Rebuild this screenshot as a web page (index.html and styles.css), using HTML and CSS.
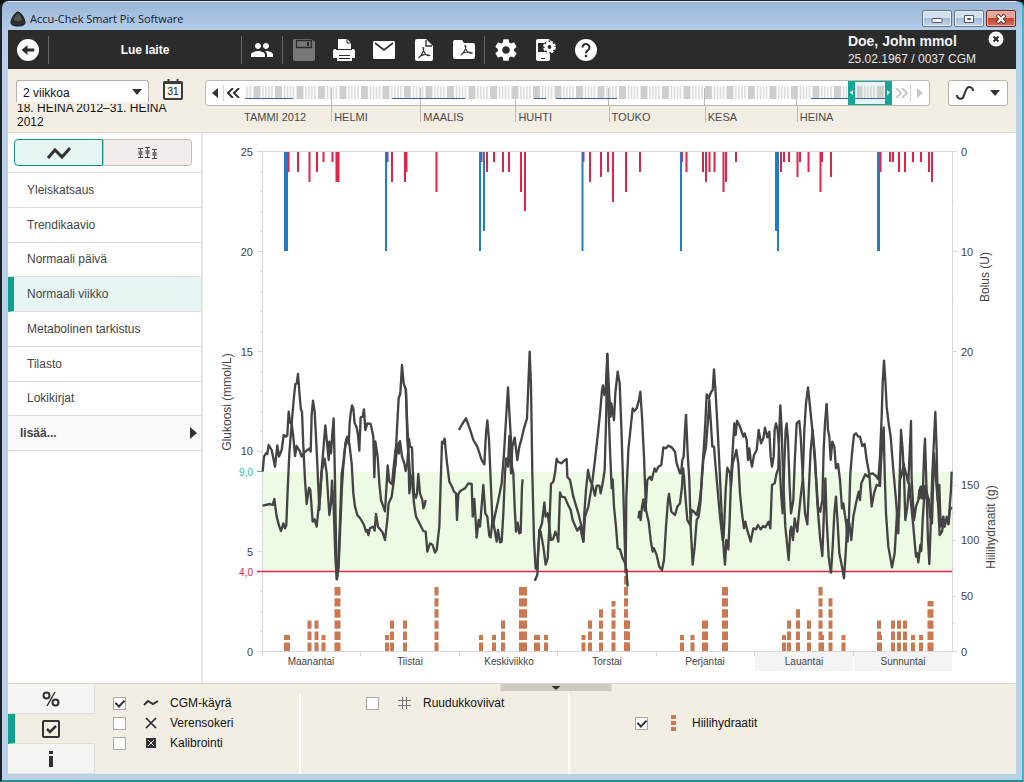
FILE: index.html
```html
<!DOCTYPE html>
<html lang="fi">
<head>
<meta charset="utf-8">
<title>Accu-Chek Smart Pix Software</title>
<link rel="stylesheet" href="styles.css">
</head>
<body>
<div class="window">
  <div class="titlebar">
    <svg class="app-icon" viewBox="0 0 16 16" aria-hidden="true"><path d="M8 1C5 1 1 8 1 11.500c0 2.500 2.500 3.500 7 3.500s7-1 7-3.500C15 8 11 1 8 1z" fill="#2e2e2e" stroke="#111"/><path d="M8 3C6 3 4 7 4 9c2 1.500 6 1.500 8 0 0-2-2-6-4-6z" fill="#555"/></svg>
    <span class="app-name">Accu-Chek Smart Pix Software</span>
    <div class="window-buttons">
      <button type="button" aria-label="Pienennä"><svg width="12" height="10"><rect x="1" y="4.500" width="10" height="4" rx="1" fill="#fff" stroke="#4c5566"/></svg></button>
      <button type="button" aria-label="Suurenna"><svg width="12" height="10"><path d="M1.500 1.500h9v7h-9zM4.500 4.500h3v1h-3z" fill="#fff" stroke="#4c5566"/></svg></button>
      <button type="button" class="close" aria-label="Sulje"><svg width="14" height="10"><path d="M3 1l8 8M11 1L3 9" stroke="#5b2a2a" stroke-width="4"/><path d="M3.500 1.500l7 7M10.500 1.500l-7 7" stroke="#fff" stroke-width="2.400"/></svg></button>
    </div>
  </div>

  <div class="app">
    <header class="toolbar">
      <button type="button" class="tool" aria-label="Takaisin"><svg width="24" height="24" viewBox="0 0 24 24"><circle cx="12" cy="12" r="11" fill="#fff"/><path d="M5.500 12l6-5v3.400h6.700v3.200h-6.700V17z" fill="#2b2b2b"/></svg></button>
      <button type="button" class="read-device">Lue laite</button>
      <div class="tool-group"><button type="button" class="tool" aria-label="Potilaat"><svg width="24" height="24" viewBox="0 0 24 24"><path fill="#fff" d="M16 11c1.660 0 2.990-1.340 2.990-3S17.660 5 16 5s-3 1.340-3 3 1.340 3 3 3zm-8 0c1.660 0 2.990-1.340 2.990-3S9.660 5 8 5 5 6.340 5 8s1.340 3 3 3zm0 2c-2.330 0-7 1.170-7 3.500V19h14v-2.500C15 14.170 10.330 13 8 13zm8 0c-.29 0-.62.020-.97.050 1.160.84 1.970 1.970 1.970 3.450V19h6v-2.500c0-2.330-4.670-3.500-7-3.500z"/></svg></button></div>
      <div class="tool-group spaced">
        <button type="button" class="tool" aria-label="Tallenna" disabled><svg width="24" height="24" viewBox="0 0 24 24"><path d="M3 1h16l4 3v17a2 2 0 0 1-2 2H3a2 2 0 0 1-2-2V3a2 2 0 0 1 2-2z" fill="#777"/><path d="M4.500 2.500h15v7h-15z" fill="#777" stroke="#2b2b2b" stroke-width="1.300"/><path d="M15 4h2v4h-2z" fill="#2b2b2b"/></svg></button>
        <button type="button" class="tool" aria-label="Tulosta"><svg width="24" height="24" viewBox="0 0 24 24"><path d="M6 1h9l4 4v6H6z" fill="#fff"/><path d="M15 1v4h4" fill="none" stroke="#2b2b2b"/><path d="M3 11h18a2 2 0 0 1 2 2v7h-3v3H5v-3H1v-7a2 2 0 0 1 2-2z" fill="#fff"/><path d="M4 11.500h16M7 17.500h11M7 20.500h11" stroke="#2b2b2b" stroke-width="1.200"/></svg></button>
        <button type="button" class="tool" aria-label="Sähköposti"><svg width="24" height="24" viewBox="0 0 24 24"><rect x="1" y="3" width="22" height="18" rx="1.500" fill="#fff"/><path d="M3 5l9 7 9-7" fill="none" stroke="#2b2b2b" stroke-width="1.600"/></svg></button>
        <button type="button" class="tool" aria-label="PDF"><svg width="24" height="24" viewBox="0 0 24 24"><path d="M3 3a2 2 0 0 1 2-2h9l7 7v13a2 2 0 0 1-2 2H5a2 2 0 0 1-2-2z" fill="#fff"/><path d="M14 2v6h6" fill="none" stroke="#2b2b2b" stroke-width="1.300"/><path d="M11 9.500c2 0 0 7-4.500 10.500 2-3 7-4.500 11-2.500-3 1-6-2.500-6.500-8z" fill="none" stroke="#2b2b2b" stroke-width="1.100"/></svg></button>
        <button type="button" class="tool" aria-label="PDF-kansio"><svg width="24" height="24" viewBox="0 0 24 24"><path d="M1 4a2 2 0 0 1 2-2h7l2 3h9a2 2 0 0 1 2 2v12a2 2 0 0 1-2 2H3a2 2 0 0 1-2-2z" fill="#fff"/><path d="M13 7.500c2 0 0 7-4 9.500 2-3 7-3.500 11-2-3 1-6.500-2-7-7.500z" fill="none" stroke="#2b2b2b" stroke-width="1.100"/></svg></button>
      </div>
      <div class="tool-group spaced">
        <button type="button" class="tool" aria-label="Asetukset"><svg width="26" height="26" viewBox="0 0 24 24"><path fill="#fff" d="M19.430 12.980c.04-.32.07-.64.07-.98s-.03-.66-.07-.98l2.110-1.650c.19-.15.24-.42.12-.64l-2-3.460c-.12-.22-.39-.3-.61-.22l-2.490 1c-.52-.4-1.080-.73-1.690-.98l-.38-2.650C14.460 2.180 14.250 2 14 2h-4c-.25 0-.46.180-.49.420l-.38 2.650c-.61.250-1.170.59-1.690.98l-2.490-1c-.23-.09-.49 0-.61.220l-2 3.460c-.13.220-.07.490.12.640l2.110 1.650c-.04.320-.07.650-.07.980s.03.660.07.980l-2.110 1.650c-.19.150-.24.420-.12.640l2 3.460c.12.220.39.300.61.220l2.490-1c.52.400 1.080.730 1.690.980l.38 2.650c.03.240.24.420.49.420h4c.25 0 .46-.18.490-.42l.38-2.650c.61-.25 1.170-.59 1.690-.98l2.490 1c.23.090.49 0 .61-.22l2-3.460c.12-.22.07-.49-.12-.64l-2.110-1.650zM12 15.500c-1.930 0-3.500-1.570-3.500-3.500s1.570-3.500 3.500-3.500 3.500 1.570 3.500 3.500-1.570 3.500-3.500 3.500z"/></svg></button>
        <button type="button" class="tool" aria-label="Laiteasetukset"><svg width="24" height="24" viewBox="0 0 24 24"><rect x="2" y="1" width="14" height="22" rx="2" fill="#fff"/><path d="M4 5h10v9H4z" fill="#2b2b2b"/><path d="M7 20.500h4" stroke="#2b2b2b"/><circle cx="15.500" cy="9" r="6.500" fill="#2b2b2b"/><circle cx="15.500" cy="9" r="5.200" fill="none" stroke="#fff" stroke-width="2.500" stroke-dasharray="2.600 1.480"/><circle cx="15.500" cy="9" r="3.400" fill="none" stroke="#fff" stroke-width="3"/></svg></button>
        <button type="button" class="tool" aria-label="Ohje"><svg width="24" height="24" viewBox="0 0 24 24"><circle cx="12" cy="12" r="11" fill="#fff"/><path d="M8.500 9.500a3.500 3.500 0 1 1 5.500 2.800c-1.300 1-2 1.500-2 3" fill="none" stroke="#2b2b2b" stroke-width="2"/><circle cx="12" cy="18" r="1.300" fill="#2b2b2b"/></svg></button>
      </div>
      <div class="patient"><strong>Doe, John mmol</strong><span>25.02.1967 / 0037 CGM</span></div>
      <button type="button" class="patient-close" aria-label="Sulje potilas"><svg width="16" height="16"><circle cx="8" cy="8" r="7.500" fill="#fff"/><path d="M5.500 5.500l5 5M10.500 5.500l-5 5" stroke="#2b2b2b" stroke-width="2"/></svg></button>
    </header>

    <section class="period">
      <div class="range">
        <div class="range-row">
          <div class="range-select"><select aria-label="Ajanjakso"><option>2 viikkoa</option></select><svg width="10" height="6"><path d="M0 0h10L5 6z" fill="#333"/></svg></div>
          <button type="button" class="calendar" aria-label="Kalenteri"><svg width="20" height="22" viewBox="0 0 20 22"><rect x="1" y="4" width="18" height="17" rx="1" fill="#f8f5ee" stroke="#3c3c3c" stroke-width="2"/><path d="M1 5h18M5.500 1v5M14.500 1v5" stroke="#3c3c3c" stroke-width="2"/><text class="cal-day" x="10" y="17">31</text></svg></button>
        </div>
        <p class="range-text">18. HEINA 2012–31. HEINA 2012</p>
      </div>
      <div class="timeline">
        <div class="track">
          <button type="button" class="step divided" aria-label="Edellinen"><svg width="6" height="10"><path d="M6 0v10L0 5z" fill="#333"/></svg></button>
          <button type="button" class="step" aria-label="Edellinen jakso"><svg width="13" height="10"><path d="M6 0L1 5l5 5M12 0L7 5l5 5" fill="none" stroke="#333" stroke-width="2"/></svg></button>
          <svg class="days" viewBox="242 81 651 24" preserveAspectRatio="none" aria-hidden="true">
            <defs><pattern id="week" x="361" y="0" width="21.500" height="120" patternUnits="userSpaceOnUse"><path d="M0 0h7v120H0z" fill="#cecece"/><path d="M9 0h1v120H9zM12 0h1v120h-1zM15 0h1v120h-1zM18 0h1v120h-1z" fill="#c6c6c6"/></pattern></defs>
            <path d="M331.500 88v20M420.500 88v20M515.500 88v20M608.500 88v20M704.500 88v20M796.500 88v20" stroke="#bbb"/>
            <path d="M245 86h602v13H245z" fill="url(#week)"/>
            <path d="M245 98h48v1h-48zM392 98h73v1h-73zM534 98h12v1h-12zM556 98h61v1h-61zM811 98h37v1h-37z" fill="#3f62a5"/>
            <path d="M850 82h40v22h-40z" fill="#e6f5f3"/><path d="M857 86h27v13h-27z" fill="url(#week)"/><path d="M855 98h30v1h-30z" fill="#3f62a5"/>
            <path d="M848 81h44v24h-44zM855 82v22h30V82z" fill="#16a697" fill-rule="evenodd"/>
            <path d="M853 90v5l-3-2.500zM887 90v5l3-2.500z" fill="#fff"/>
          </svg>
          <button type="button" class="step divided" aria-label="Seuraava jakso" disabled><svg width="13" height="10"><path d="M1 0l5 5-5 5M7 0l5 5-5 5" fill="none" stroke="#c8c8c8" stroke-width="2"/></svg></button>
          <button type="button" class="step" aria-label="Seuraava" disabled><svg width="6" height="10"><path d="M0 0v10l6-5z" fill="#c8c8c8"/></svg></button>
        </div>
        <div class="months"><span>TAMMI 2012</span><span>HELMI</span><span>MAALIS</span><span>HUHTI</span><span>TOUKO</span><span>KESA</span><span>HEINA</span></div>
      </div>
      <button type="button" class="curve-menu" aria-label="Käyrätyyppi"><svg width="20" height="16"><path d="M1 10c0 4 6 6 7 0l2-5c2-5 7-3 7 1" fill="none" stroke="#333" stroke-width="2"/></svg><svg width="10" height="6"><path d="M0 0h10L5 6z" fill="#333"/></svg></button>
    </section>

    <div class="workspace">
      <aside class="sidebar">
        <div class="view-switch">
          <button type="button" class="on" aria-label="Käyrä"><svg width="24" height="14"><path d="M1 12l7-8 7 7 8-9" fill="none" stroke="#333" stroke-width="3"/></svg></button>
          <button type="button" aria-label="Laatikkokaavio"><svg width="20" height="12"><path d="M0 1.500h5M0 10.500h5M2.500 1v10M7 .5h5M7 10.500h5M9.500 0v10M14 2.500h5M14 11.500h5M16.500 2v10" stroke="#444"/><path d="M.5 4h4v4h-4zM7.500 3h4v4h-4zM14.500 5h4v4h-4z" fill="#777"/></svg></button>
        </div>
        <nav class="views">
          <a href="#">Yleiskatsaus</a>
          <a href="#">Trendikaavio</a>
          <a href="#">Normaali päivä</a>
          <a href="#" class="current" aria-current="page">Normaali viikko</a>
          <a href="#">Metabolinen tarkistus</a>
          <a href="#">Tilasto</a>
          <a href="#">Lokikirjat</a>
          <a href="#" class="more">lisää...<svg width="7" height="12"><path d="M0 0v12l7-6z" fill="#333"/></svg></a>
        </nav>
      </aside>

      <main class="chart-area">
        <svg class="chart" viewBox="203 133 813 550" role="img" aria-label="Normaali viikko">
          <path d="M263 472h689v99H263z" fill="#edfbe4"/>
          <path d="M755 652h98v19h-98zM854 652h98v19h-98z" fill="#f4f4f4"/>
          <path class="grid" d="M257 151.500H957M262.500 151v505M952.500 151v501M257 651.500H957M257 251.500h6M257 351.500h6M257 451.500h6M257 551.500h6M952 251.500h5M952 351.500h5M952 485.500h4M952 540.500h4M952 596.500h4M360.500 652v4M459.500 652v4M557.500 652v4M656.500 652v4M754.500 652v4M853.500 652v4"/>
          <path class="grid" d="M260 171.500h3M260 191.500h3M260 211.500h3M260 231.500h3M260 271.500h3M260 291.500h3M260 311.500h3M260 331.500h3M260 371.500h3M260 391.500h3M260 411.500h3M260 431.500h3M260 491.500h3M260 511.500h3M260 531.500h3M260 591.500h3M260 611.500h3M260 631.500h3M952 201.500h2M952 301.500h2M952 512.500h2M952 568.500h2M952 623.500h2"/>
          <path d="M257 471.500h5" stroke="#2bbfa8"/>

          <g class="bolus" fill="none" stroke-width="2">
            <path stroke="#de2549" d="M288.500 152v20M298 152v20M309.500 152v30M317 152v20M323.500 152v10M332.500 152v10M336.500 152v30M338.500 152v30M387.500 152v10M392 152v30M405 152v30M406.500 152v20M436.500 152v40M481.500 152v10M487 152v20M494 152v10M503 152v20M509 152v20M521 152v40M525 152v59M583.500 152v10M590 152v30M601 152v25M608 152v20M613 152v50M626 152v40M640 152v20M682 152v10M686.500 152v20M703 152v20M706 152v30M709.500 152v20M714.500 152v20M723.500 152v40M726 152v30M736 152v10M781 152v20M784 152v10M789 152v10M797.500 152v25M800 152v10M808.500 152v20M820.500 152v40M822 152v10M831 152v25M880.500 152v20M890 152v10M893 152v10M899 152v20M905 152v20M913 152v10M921 152v10M929 152v20M932 152v30"/>
            <path stroke="#207cc8" d="M285 152v99M287 152v99M386 152v99M480 152v99M484 152v79M582.500 152v99M681 152v99M776 152v79M778 152v99M878 152v99M879 152v99"/>
          </g>

          <g class="carbs">
            <path stroke-width="4" d="M309.500 651v-31M316.500 651v-31M323.500 651v-16M387 651v-16M392 651v-31M405 651v-31M436.500 651v-65M481 651v-16M494 651v-16M503 651v-31M546 651v-16M583.500 651v-16M590 651v-31M601 651v-42M613.500 651v-50M626 651v-82M682 651v-16M692.500 651v-16M784 651v-16M789 651v-31M798 651v-42M809 651v-31M820.500 651v-65M822 651v-16M830.500 651v-54M843.500 651v-16M879 651v-31M880 651v-16M893 651v-31M899 651v-31M905 651v-31M913 651v-16M921 651v-16"/>
            <path stroke-width="6" d="M287 651v-16M337.500 651v-65M537 651v-16M627 651v-31M705 651v-31M725 651v-65M930.500 651v-50"/>
            <path stroke-width="8" d="M523 651v-65"/>
          </g>

          <path d="M257 571.500H952" stroke="#e0254f" stroke-width="1.500"/>

          <g class="glucose">
            <g transform="translate(250 340) scale(.33333)">
              <path d="M38 395L42 350 48 340 52 342 56 315 65 330 70 355 75 380 82 316 87 350 95 330 101 285 108 290 112 285 116 215 120 248 125 250 130 290 135 348 140 318 150 335 155 350 165 335 180 325 182 335 185 225 189 182 194 215 200 330 205 440 208 510 214 400 220 330 226 256 232 318 236 360 238 305 243 340 247 280 251 235 255 420 258 600 261 717 266 680 270 580 276 440 282 345 290 295 298 310 305 370 310 460 315 500 322 525 332 537 342 555 348 575 352 570 355 585 360 565 370 560 374 572 378 522 384 560 392 570 398 578 405 600 412 540 416 490 425 470 432 420 436 370 440 285 446 175 451 160 456 75 461 130 468 150 472 300 480 400 486 420 492 490 498 530 506 545 520 573 527 575 532 635 540 610 548 615 555 638 560 630 568 560 573 400 576 305 580 310 584 296 590 360 598 425 605 438 612 455 618 460 621 540 625 462 632 452 645 445 655 430 665 432 668 530 673 477 680 593 686 540 690 560 700 435 706 520 712 530 718 590"/>
              <path d="M38 497L60 492 68 495 73 477 80 530 88 560 93 573 100 550 105 565 109 555 113 450 118 340 125 250 131 180 136 132 140 130 144 102 150 180 153 210 156 215 160 320 165 420 170 492 177 443 181 450 188 545 194 538 200 560 206 500 210 470 216 390 224 356 230 400 238 525 243 490 246 422 251 500 256 650 260 718 265 680 270 540 275 400 282 360 286 310 292 290 296 312 299 250 302 220 306 196 310 205 314 250 320 262 324 285 328 332 332 232 338 230 342 208 346 270 352 250 362 252 370 290 373 412 376 304 383 350 388 430 393 480 405 514 410 430 413 376 418 425 426 432 430 390 436 335 440 310 445 320 450 303 456 350 463 370 467 393 472 370 477 297 480 320 486 322 488 380 492 460 498 473 501 460 505 402 510 460 517 480 520 505 524 495 527 480"/>
              <path d="M432 400L437 370 441 320 447 340 449 305M467 145L474 300 478 460 484 410"/>
            </g>
            <g transform="translate(450 340) scale(.33333)">
              <path d="M27 270L35 255 48 235 58 262 70 300 82 320 95 360 103 373 108 280 112 241 117 300 122 420 128 560 134 530 145 480 155 430 162 340 168 240 174 142 180 250 183 300 186 380 190 400 194 500 198 575 203 548 208 580 212 578 216 440 218 418"/>
              <path d="M118 590L122 592 128 535 134 570 140 605 144 570 150 607 155 605 160 520 165 400 168 355 174 380 178 288 183 400 187 320 194 293 202 360 208 320 215 295 222 265 231 235 239 35 243 140 247 400 252 600 257 686 262 685 268 570 272 575 280 620 287 674 293 655 298 560 303 432 310 425 315 400 320 356 325 366 335 370 342 362 350 357 352 410 360 420 370 470 385 520 395 560 400 605 405 530 415 500 425 440 435 360 445 270 451 210 456 150 459 136 463 165 467 150 472 42 477 150 482 230 484 190 489 220 492 240 496 160 503 95 509 130 514 260 519 420 524 600 527 690 529 470 535 330 548 205 553 213 560 205 567 180 571 155 576 230 582 350 588 510 596 545 602 600 608 635 612 625 620 645 628 680 636 690 642 660 648 560 654 480 657 462 664 515 675 525 682 500 690 490 696 440 699 383"/>
              <path d="M254 722L262 705 264 640 269 570 276 550 283 487 287 530 293 520 298 560 303 600 309 598 316 575 322 590 325 605 330 457 335 470 345 472 352 490 362 510 368 540 382 572 390 560 400 605 403 520 408 450 414 390 420 420 427 435 435 467 440 437 448 437 452 460 458 430 464 390 468 250 472 42 475 180 480 330 485 445 488 418 492 500 498 560 503 625 510 628 518 655 526 670 530 700 533 740"/>
              <path d="M565 535L568 515 572 540 576 500 580 478 584 512 588 490 592 420 600 410 605 420 610 400 614 385 618 395 625 380 634 375 640 322 648 325 655 317 665 322 675 335 680 370 690 400 693 400 697 360 701 350 705 270 708 222"/>
            </g>
            <g transform="translate(640 340) scale(.33333)">
              <path d="M138 222L143 340 148 420 152 560 158 674 164 620 170 540 176 530 182 480 186 400 191 330 196 250 200 163 206 175 210 165 214 155 218 150 222 88 227 160 233 270 238 370 243 480 248 580 252 640 255 674 259 600 265 628 269 540 273 420 278 330 283 250 287 285 291 243 298 255 306 278 310 290 314 280 320 300 324 360 328 325 332 360 336 380 342 345 350 330 356 270 363 310 370 295 375 263 382 292 388 275 392 350 396 380 401 350 404 270 408 250 413 270 417 320 420 400 424 470 428 520 433 370 437 270 440 250 444 300 449 440 453 520 460 480 464 370 470 250 478 243 482 290 488 400 495 520 502 553 506 460 512 330 518 270 525 350 532 490 540 590 547 648 551 540 553 470 556 415 560 540 566 650 573 700"/>
              <path d="M129 383L132 410 137 480 142 540 150 555 155 510 162 515 170 525 178 490 184 440 190 360 198 320 204 240 208 180 212 240 217 320 222 320 226 370 232 440 240 530 248 600 251 590 257 450 262 383 270 400 273 440 278 370 284 350 289 330 295 370 300 460 306 520 312 565 316 545 323 575 332 605 340 565 348 568 354 555 362 568 370 558 376 562 386 545 391 565 396 435 404 430 410 400 415 385 418 270 421 196 425 270 430 430 436 560 446 660 451 570 454 560 459 600 464 535 472 575 476 530 482 470 488 420 493 270 498 190 504 142 510 200 516 260 522 330 530 440 534 500 541 515 547 480 551 330 555 250 557 225 560 190"/>
            </g>
            <g transform="translate(800 340) scale(.33333)">
              <path d="M80 190L84 270 88 290 92 360 97 305 103 320 108 385 114 372 120 420 126 505 130 490 134 520 140 560 143 605 147 530 151 400 156 340 162 285 168 280 175 290 180 290 187 318 194 312 200 360 208 403 218 400 228 408 235 418 240 350 245 230 248 130 252 62 256 120 260 200 266 250 272 290 280 390 288 480 295 580 298 450 303 270 308 330 310 370 318 400 325 430 333 243 335 420 342 540 348 500 355 480 358 450 364 440 368 475 372 350 375 296 379 430 384 600 388 672 392 560 397 400 402 300 406 216 410 330 413 480 418 435 422 560 430 530 434 560 440 530 446 550 449 500 453 450 455 395"/>
              <path d="M93 700L98 620 103 520 108 470 113 550 118 640 126 680 132 715 137 640 142 540 148 550 154 600 160 530 168 490 176 455 180 480 184 430 196 403 203 410 208 403 215 500 222 460 230 435 240 438 243 370 246 320 251 262 254 400 258 520 265 620 276 682 284 640 291 520 297 530 300 420 306 400 311 370 316 540 322 500 328 430 333 490 340 560 348 650 352 640 355 667 361 615 364 633 368 540 372 480 375 440 386 478 390 530 396 550 402 340 408 420 414 490 419 585 426 575 432 540 440 540 445 553 450 510 455 500"/>
              <path d="M238 438L242 330 247 330 250 270M358 478L362 440 366 475 370 437 374 470 378 437 379 475 388 480"/>
            </g>
          </g>

          <g class="labels end"><text x="253" y="156">25</text><text x="253" y="256">20</text><text x="253" y="356">15</text><text x="253" y="455">10</text><text x="253" y="556">5</text><text x="253" y="656">0</text><text class="high" x="253" y="476">9,0</text><text class="low" x="253" y="576">4,0</text></g>
          <g class="labels"><text x="961" y="156">0</text><text x="961" y="256">10</text><text x="961" y="356">20</text><text x="961" y="489">150</text><text x="961" y="544">100</text><text x="961" y="600">50</text><text x="961" y="656">0</text></g>
          <g class="labels mid"><text x="311" y="665">Maanantai</text><text x="410" y="665">Tiistai</text><text x="509" y="665">Keskiviikko</text><text x="607" y="665">Torstai</text><text x="705" y="665">Perjantai</text><text x="804" y="665">Lauantai</text><text x="903" y="665">Sunnuntai</text></g>
          <g class="axis-names"><text transform="translate(231 402) rotate(-90)">Glukoosi (mmol/L)</text><text transform="translate(989 277) rotate(-90)">Bolus (U)</text><text transform="translate(995 527) rotate(-90)">Hiilihydraatit (g)</text></g>
        </svg>
      </main>
    </div>

    <section class="bottom">
      <div class="tabs">
        <button type="button" aria-label="Tilastot"><svg width="18" height="16"><circle cx="4.500" cy="4.500" r="3" fill="none" stroke="#333" stroke-width="2"/><circle cx="13.500" cy="11.500" r="3" fill="none" stroke="#333" stroke-width="2"/><path d="M13 1L5 15" stroke="#333" stroke-width="1.500"/></svg></button>
        <button type="button" class="on" aria-label="Selite"><svg width="18" height="18"><rect x="1" y="1" width="16" height="16" rx="1" fill="none" stroke="#333" stroke-width="2"/><path d="M5 9l3 3 6-6" fill="none" stroke="#333" stroke-width="2.500"/></svg></button>
        <button type="button" aria-label="Tiedot"><svg width="6" height="16"><path d="M1 0h4v3H1zM1 5h4v11H1z" fill="#333"/></svg></button>
      </div>
      <div class="legend">
        <button type="button" class="handle" aria-label="Piilota"><svg width="9" height="4"><path d="M0 0h9L4.500 4z" fill="#333"/></svg></button>
        <div class="legend-col">
          <label><input type="checkbox" checked><span class="mark"><svg width="16" height="8"><path d="M1 6l4-4 5 3 5-3" fill="none" stroke="#333" stroke-width="2"/></svg></span>CGM-käyrä</label>
          <label><input type="checkbox"><span class="mark"><svg width="12" height="12"><path d="M1 1l10 10M11 1L1 11" stroke="#222" stroke-width="1.500"/></svg></span>Verensokeri</label>
          <label><input type="checkbox"><span class="mark"><svg width="10" height="10"><path d="M0 0h10v10H0z" fill="#333"/><path d="M2 2l6 6M8 2L2 8" stroke="#eee"/></svg></span>Kalibrointi</label>
        </div>
        <div class="legend-col second">
          <label><input type="checkbox"><span class="mark"><svg width="13" height="12"><path d="M4.500 0v12M8.500 0v12M0 3.500h13M0 8.500h13" stroke="#777"/></svg></span>Ruudukkoviivat</label>
        </div>
        <div class="legend-col third">
          <label><input type="checkbox" checked><span class="mark"><svg width="5" height="16"><path d="M0 0h5v4H0zM0 6h5v4H0zM0 12h5v4H0z" fill="#cb7851"/></svg></span>Hiilihydraatit</label>
        </div>
      </div>
    </section>
  </div>
</div>
</body>
</html>
```
FILE: styles.css
```css
* { box-sizing: border-box; }
body {
  margin: 0;
  background: #111;
  color: #333;
  font: 12px/16px "Liberation Sans", Arial, sans-serif;
}
button, select, input { font: inherit; color: inherit; margin: 0; }
button { display: flex; align-items: center; justify-content: center; padding: 0; border: 0; background: none; }
svg { display: block; flex: none; }

.window {
  display: flex;
  flex-direction: column;
  min-height: 100vh;
  padding: 0 6px 6px;
  border: 2px solid #20242c;
  border-top-width: 1px;
  border-right-color: #35b9cf;
  border-bottom-color: #2b8c96;
  border-radius: 8px 8px 0 0;
  background: linear-gradient(#9ab6d6, #b3cde9 30px, #bcd0e8 110px);
}
.titlebar { display: flex; align-items: center; height: 29px; padding: 5px 0 0 2px; border-top: 1px solid #e0ebf7; }
.app-icon { width: 16px; height: 16px; }
.app-name { margin-left: 4px; color: #101828; font: 11px/16px "Open Sans", sans-serif; }
.window-buttons { display: flex; gap: 2px; margin-left: auto; }
.window-buttons button {
  width: 30px; height: 17px;
  border: 1px solid #66758c; border-radius: 2px;
  background: linear-gradient(#d4e1f0 45%, #a5bcd8 50%, #c3d7ec);
  box-shadow: inset 0 0 0 1px #e6eef8;
}
.window-buttons .close { background: linear-gradient(#e3a598 45%, #c5402c 50%, #d4735a); border-color: #6d2a27; box-shadow: inset 0 0 0 1px #e9b2a7; }

.app { display: flex; flex: 1; flex-direction: column; background: #fff; }

.toolbar { display: flex; align-items: center; height: 39px; background: #2b2b2b; color: #fff; }
.tool { width: 40px; height: 28px; }
.read-device { width: 194px; height: 28px; border: solid #666; border-width: 0 1px; font-weight: bold; }
.tool-group { display: flex; height: 28px; }
.tool-group + .tool-group { border-left: 1px solid #666; }
.spaced { padding-left: 1px; }
.patient { display: flex; flex: none; flex-direction: column; margin-left: auto; white-space: nowrap; line-height: 18px; color: #e6e6e6; }
.patient strong { font-size: 14px; color: #f2f2f2; }
.patient-close { align-self: flex-start; margin: 1px 12px 0 12px; }

.period { display: flex; min-height: 64px; background: #f2eee4; border-bottom: 1px solid #dedad0; padding: 11px 8px 0; }
.range { width: 189px; }
.range-row { display: flex; align-items: flex-start; gap: 14px; }
.range-select { display: flex; align-items: center; width: 133px; height: 22px; padding-right: 6px; border: 1px solid #b5b1a8; border-bottom: 0; border-radius: 3px 3px 0 0; background: #fff; }
.range-select select { flex: 1; height: 21px; padding: 2px 6px 0; appearance: none; border: 0; background: none; color: #111; }
.calendar { margin-top: -2px; }
.cal-day { font: 10px "Liberation Sans", sans-serif; text-anchor: middle; fill: #222; }
.range-text { display: flex; align-items: center; width: 170px; height: 22px; margin: 2px 0 0; padding: 0 8px 0 1px; overflow: hidden; line-height: 14px; color: #111; }
.timeline { flex: 1; }
.track { display: flex; height: 26px; border: 1px solid #bcb8b0; border-radius: 3px; background: #fff; }
.step { width: 18px; height: 16px; margin-top: 4px; }
.divided { border-right: 1px solid #d5d5d5; }
.days { flex: 1; min-width: 0; height: 24px; }
.months { display: grid; grid-template-columns: 92fr 89fr 95fr 93fr 96fr 92fr 96fr; margin: 0 37px 0 34px; color: #4a4a4a; font-size: 11px; line-height: 22px; }
.months span { height: 16px; padding-left: 2px; border-left: 1px solid #c0bcb3; white-space: nowrap; }
.months span:first-child { padding-left: 4px; border-color: transparent; }
.curve-menu { gap: 14px; width: 60px; height: 26px; margin-left: 18px; border: 1px solid #b5b1a8; border-radius: 3px; background: #fff; }

.workspace { display: flex; flex: 1; }
.sidebar { width: 195px; border-right: 2px solid #e9e6e2; }
.view-switch { display: flex; height: 27px; margin: 6px 9px 6px 6px; }
.view-switch button { flex: 1; border: 1px solid #c3bfbb; border-radius: 0 4px 4px 0; background: #f2edea; }
.view-switch .on { border-color: #129687; border-radius: 4px 0 0 4px; background: #e6f6f4; }
.views { display: grid; grid-auto-rows: 1fr; height: 279px; border-top: 1px solid #e0dddd; }
.views a { display: flex; align-items: center; padding-left: 19px; border-bottom: 1px solid #e0dddd; color: #444; text-decoration: none; }
.views .current { padding-left: 13px; border-left: 6px solid #10a090; background: #e7f5f4; }
.views .more { justify-content: space-between; padding: 0 4px 0 12px; background: #fafafa; font-weight: bold; }

.chart-area { flex: 1; min-width: 0; }
.chart { width: 100%; height: auto; }
.grid { fill: none; stroke: #d8d8d8; }
.carbs { fill: none; stroke: #cb7851; stroke-dasharray: 8.400 2.700; }
.glucose { fill: none; stroke: #444; stroke-width: 7; stroke-linejoin: round; }
.labels { font-size: 11px; fill: #444; }
.end { text-anchor: end; }
.mid { font-size: 10px; text-anchor: middle; }
.high { font-size: 10px; fill: #2bbfa8; }
.low { font-size: 10px; fill: #dc2950; }
.axis-names { font-size: 12px; text-anchor: middle; fill: #444; }

.bottom { display: flex; min-height: 91px; background: #f2eee4; border-top: 1px solid #d9d5cb; color: #111; }
.tabs { display: grid; grid-template-rows: repeat(3, 1fr); width: 87px; }
.tabs button { border: solid #e2dfd8; border-width: 0 1px 1px 0; background: #f5f5f4; }
.tabs .on { padding-right: 7px; border-left: 7px solid #10a090; border-right-color: transparent; background: none; }
.legend { position: relative; display: grid; flex: 1; grid-template-columns: 206fr 269fr 446fr; padding-top: 9px; }
.handle { position: absolute; top: 0; left: 50%; width: 111px; height: 7px; transform: translateX(-50%); background: #cfcabf; }
.legend-col { display: flex; flex-direction: column; gap: 4px; padding: 2px 0 0 18px; border-right: 2px solid #fff; }
.second { padding-left: 65px; }
.third { padding: 22px 0 0 65px; border: 0; }
.legend label { display: flex; align-items: center; }
.mark { display: flex; justify-content: center; width: 16px; margin: 0 11px 0 17px; }
input[type="checkbox"] { appearance: none; display: grid; place-items: center; width: 13px; height: 13px; border: 1px solid #aaa; background: #fff; }
input[type="checkbox"]:checked::after { content: ""; width: 4px; height: 7px; margin-bottom: 2px; border: solid #333; border-width: 0 2px 2px 0; transform: rotate(45deg); }
```
